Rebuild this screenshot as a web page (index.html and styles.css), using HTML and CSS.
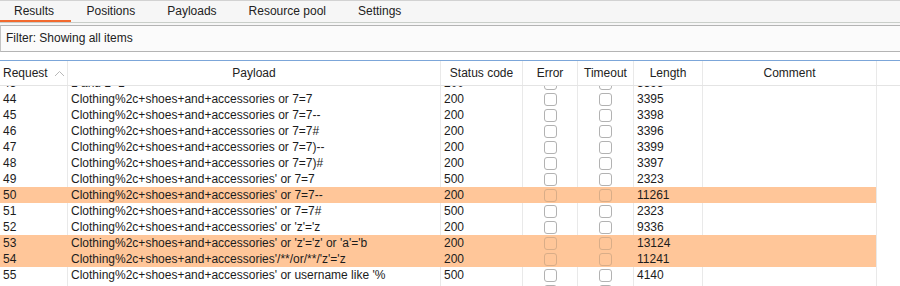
FILE: index.html
```html
<!DOCTYPE html>
<html>
<head>
<meta charset="utf-8">
<link rel="stylesheet" href="styles.css">
</head>
<body>
<div class="tabs">
  <div class="tab active">Results</div>
  <div class="tab">Positions</div>
  <div class="tab">Payloads</div>
  <div class="tab">Resource pool</div>
  <div class="tab">Settings</div>
</div>
<div class="filter-area">
  <div class="filter-box">Filter: Showing all items</div>
</div>
<div class="table">
  <div class="row head">
    <div class="c left">Request <svg class="sort" width="11" height="7" viewBox="0 0 11 7"><polyline points="1,6 5.5,1.5 10,6" fill="none" stroke="#b8b8b8" stroke-width="1"/></svg></div>
    <div class="c">Payload</div>
    <div class="c">Status code</div>
    <div class="c">Error</div>
    <div class="c">Timeout</div>
    <div class="c">Length</div>
    <div class="c">Comment</div>
    <div class="c filler"></div>
  </div>
  <div class="body">
    <div class="scroll">
      <div class="row"><div class="c">43</div><div class="c">1 and 1=1</div><div class="c">200</div><div class="c cb"><span class="box"></span></div><div class="c cb"><span class="box"></span></div><div class="c">3393</div><div class="c"></div><div class="c filler"></div></div>
      <div class="row"><div class="c">44</div><div class="c">Clothing%2c+shoes+and+accessories or 7=7</div><div class="c">200</div><div class="c cb"><span class="box"></span></div><div class="c cb"><span class="box"></span></div><div class="c">3395</div><div class="c"></div><div class="c filler"></div></div>
      <div class="row"><div class="c">45</div><div class="c">Clothing%2c+shoes+and+accessories or 7=7--</div><div class="c">200</div><div class="c cb"><span class="box"></span></div><div class="c cb"><span class="box"></span></div><div class="c">3398</div><div class="c"></div><div class="c filler"></div></div>
      <div class="row"><div class="c">46</div><div class="c">Clothing%2c+shoes+and+accessories or 7=7#</div><div class="c">200</div><div class="c cb"><span class="box"></span></div><div class="c cb"><span class="box"></span></div><div class="c">3396</div><div class="c"></div><div class="c filler"></div></div>
      <div class="row"><div class="c">47</div><div class="c">Clothing%2c+shoes+and+accessories or 7=7)--</div><div class="c">200</div><div class="c cb"><span class="box"></span></div><div class="c cb"><span class="box"></span></div><div class="c">3399</div><div class="c"></div><div class="c filler"></div></div>
      <div class="row"><div class="c">48</div><div class="c">Clothing%2c+shoes+and+accessories or 7=7)#</div><div class="c">200</div><div class="c cb"><span class="box"></span></div><div class="c cb"><span class="box"></span></div><div class="c">3397</div><div class="c"></div><div class="c filler"></div></div>
      <div class="row"><div class="c">49</div><div class="c">Clothing%2c+shoes+and+accessories' or 7=7</div><div class="c">500</div><div class="c cb"><span class="box"></span></div><div class="c cb"><span class="box"></span></div><div class="c">2323</div><div class="c"></div><div class="c filler"></div></div>
      <div class="row hl"><div class="c">50</div><div class="c">Clothing%2c+shoes+and+accessories' or 7=7--</div><div class="c">200</div><div class="c cb"><span class="box"></span></div><div class="c cb"><span class="box"></span></div><div class="c">11261</div><div class="c"></div><div class="c filler"></div></div>
      <div class="row"><div class="c">51</div><div class="c">Clothing%2c+shoes+and+accessories' or 7=7#</div><div class="c">500</div><div class="c cb"><span class="box"></span></div><div class="c cb"><span class="box"></span></div><div class="c">2323</div><div class="c"></div><div class="c filler"></div></div>
      <div class="row"><div class="c">52</div><div class="c">Clothing%2c+shoes+and+accessories' or 'z'='z</div><div class="c">200</div><div class="c cb"><span class="box"></span></div><div class="c cb"><span class="box"></span></div><div class="c">9336</div><div class="c"></div><div class="c filler"></div></div>
      <div class="row hl"><div class="c">53</div><div class="c">Clothing%2c+shoes+and+accessories' or 'z'='z' or 'a'='b</div><div class="c">200</div><div class="c cb"><span class="box"></span></div><div class="c cb"><span class="box"></span></div><div class="c">13124</div><div class="c"></div><div class="c filler"></div></div>
      <div class="row hl"><div class="c">54</div><div class="c">Clothing%2c+shoes+and+accessories'/**/or/**/'z'='z</div><div class="c">200</div><div class="c cb"><span class="box"></span></div><div class="c cb"><span class="box"></span></div><div class="c">11241</div><div class="c"></div><div class="c filler"></div></div>
      <div class="row"><div class="c">55</div><div class="c">Clothing%2c+shoes+and+accessories' or username like '%</div><div class="c">500</div><div class="c cb"><span class="box"></span></div><div class="c cb"><span class="box"></span></div><div class="c">4140</div><div class="c"></div><div class="c filler"></div></div>
      <div class="row"><div class="c">56</div><div class="c">Clothing%2c+shoes+and+accessories' or uname like '%</div><div class="c">500</div><div class="c cb"><span class="box"></span></div><div class="c cb"><span class="box"></span></div><div class="c">4140</div><div class="c"></div><div class="c filler"></div></div>
    </div>
  </div>
</div>
</body>
</html>
```

FILE: styles.css
```css
html, body {
  margin: 0;
  padding: 0;
  background: #ffffff;
  height: 286px;
  overflow: hidden;
}
body {
  font-family: "Liberation Sans", Arial, sans-serif;
  font-size: 12px;
  color: #1c1c1c;
}
.tabs {
  display: flex;
  height: 21px;
  background: #f6f6f6;
  border-top: 1px solid #d2d2d2;
  border-bottom: 1px solid #c9cec9;
}
.tab {
  padding: 0 16px;
  line-height: 20px;
  height: 19px;
  border-bottom: 2px solid transparent;
  color: #222;
}
.tab:first-child {
  padding-left: 14px;
  padding-right: 16.5px;
}
.tab.active {
  border-bottom-color: #f26a2f;
}
.filter-area {
  background: #f6f6f6;
  padding-top: 2px;
}
.filter-box {
  height: 25px;
  line-height: 25px;
  border-top: 1px solid #b4b4b4;
  border-bottom: 1px solid #b4b4b4;
  border-left: 1px solid #c4c4c4;
  background: #fbfbfb;
  padding-left: 5px;
  color: #222;
}
.table {
  margin-top: 8px;
  border-top: 1px solid #7ca6d9;
}
.row {
  display: grid;
  grid-template-columns: 68px 373px 82px 55px 56px 69px 174px 1fr;
  height: 16px;
}
.row.head {
  height: 24px;
  border-bottom: 1px solid #e4e4e4;
}
.c {
  box-sizing: border-box;
  border-right: 1px solid #e9e9e9;
  padding-left: 3px;
  line-height: 16px;
  white-space: nowrap;
  overflow: hidden;
}
.row.head .c {
  line-height: 24px;
  text-align: center;
  padding-left: 0;
  color: #222;
}
.row.head .c.left {
  text-align: left;
  padding-left: 3px;
  display: flex;
  align-items: center;
  gap: 6px;
}
.sort {
  display: block;
}
.c.filler {
  border-right: none;
}
.body {
  height: 200px;
  overflow: hidden;
}
.scroll {
  margin-top: -11px;
}
.row.hl .c {
  background: #ffc699;
  border-right-color: #ffc699;
}
.row.hl .c:nth-child(7) {
  border-right-color: #e9e9e9;
}
.row.hl .c.filler {
  background: transparent;
}
.c.cb {
  display: flex;
  align-items: center;
  justify-content: center;
  padding-left: 0;
}
.box {
  display: block;
  box-sizing: border-box;
  width: 13px;
  height: 13px;
  border: 1px solid #b2b2b2;
  border-radius: 3px;
  background: transparent;
}
.row.hl .box {
  border-color: #d9ad88;
}
```
